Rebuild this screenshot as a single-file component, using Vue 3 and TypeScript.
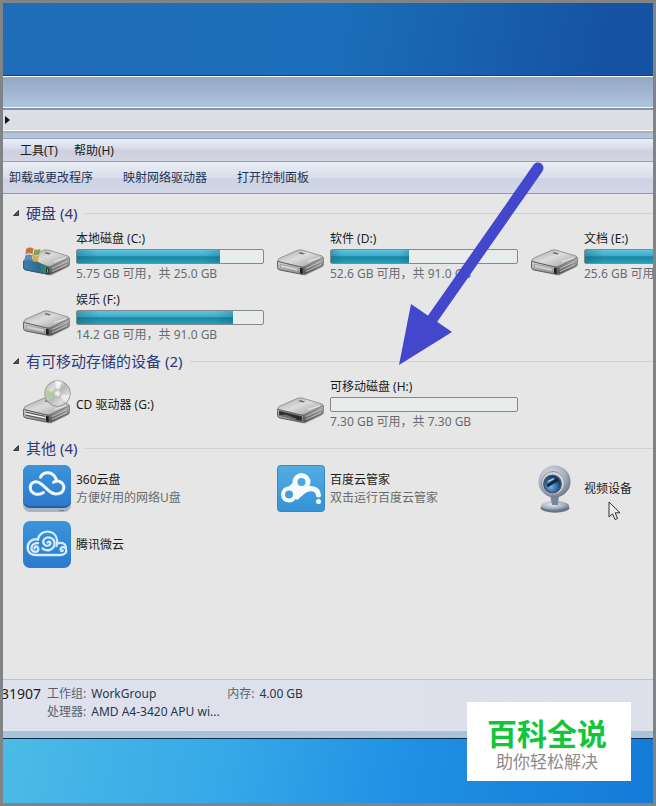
<script setup lang="ts">
type IconKind = 'system' | 'disk' | 'optical' | 'removable' | 'yun360' | 'baidu' | 'webcam' | 'weiyun'

interface Entry {
  name: string
  icon: IconKind
  used?: number
  note?: string
}

interface Group {
  title: string
  entries: Entry[]
}

const menus: string[] = ['工具(T)', '帮助(H)']
const commands: string[] = ['卸载或更改程序', '映射网络驱动器', '打开控制面板']

const groups: Group[] = [
  {
    title: '硬盘 (4)',
    entries: [
      { name: '本地磁盘 (C:)', icon: 'system', used: 77, note: '5.75 GB 可用，共 25.0 GB' },
      { name: '软件 (D:)', icon: 'disk', used: 42, note: '52.6 GB 可用，共 91.0 GB' },
      { name: '文档 (E:)', icon: 'disk', used: 72, note: '25.6 GB 可用，共 91.0 GB' },
      { name: '娱乐 (F:)', icon: 'disk', used: 84, note: '14.2 GB 可用，共 91.0 GB' },
    ],
  },
  {
    title: '有可移动存储的设备 (2)',
    entries: [
      { name: 'CD 驱动器 (G:)', icon: 'optical' },
      { name: '可移动磁盘 (H:)', icon: 'removable', used: 0, note: '7.30 GB 可用，共 7.30 GB' },
    ],
  },
  {
    title: '其他 (4)',
    entries: [
      { name: '360云盘', icon: 'yun360', note: '方便好用的网络U盘' },
      { name: '百度云管家', icon: 'baidu', note: '双击运行百度云管家' },
      { name: '视频设备', icon: 'webcam' },
      { name: '腾讯微云', icon: 'weiyun' },
    ],
  },
]

const isDrive = (icon: IconKind): boolean => ['system', 'disk', 'optical', 'removable'].includes(icon)
</script>

<template>
  <div class="desktop">
    <svg class="defs" width="0" height="0" aria-hidden="true">
      <defs>
        <linearGradient id="gTop" x1="0" y1="0" x2="1" y2="1">
          <stop offset="0" stop-color="#a2a2a2" /><stop offset=".45" stop-color="#dcdcdc" /><stop offset="1" stop-color="#999" />
        </linearGradient>
        <linearGradient id="gFront" x1="0" y1="0" x2="0" y2="1">
          <stop offset="0" stop-color="#dedede" /><stop offset="1" stop-color="#858585" />
        </linearGradient>
        <linearGradient id="gSide" x1="0" y1="0" x2="0" y2="1">
          <stop offset="0" stop-color="#b4b4b4" /><stop offset="1" stop-color="#4e4e4e" />
        </linearGradient>
        <linearGradient id="gSys" x1="0" y1="0" x2="1" y2="0">
          <stop offset="0" stop-color="#3f7fb4" /><stop offset=".6" stop-color="#2c6c8c" /><stop offset="1" stop-color="#3d9a52" />
        </linearGradient>
        <linearGradient id="gDisc" x1="0" y1="0" x2="1" y2="1">
          <stop offset="0" stop-color="#a6a6a6" /><stop offset=".3" stop-color="#dcdfda" /><stop offset=".5" stop-color="#b6bbb7" /><stop offset=".75" stop-color="#dedede" /><stop offset="1" stop-color="#949494" />
        </linearGradient>
        <linearGradient id="gYun" x1="0" y1="0" x2="0" y2="1">
          <stop offset="0" stop-color="#3a94db" /><stop offset="1" stop-color="#2c7ace" />
        </linearGradient>
        <linearGradient id="gBaidu" x1="0" y1="0" x2="0" y2="1">
          <stop offset="0" stop-color="#53ade2" /><stop offset="1" stop-color="#3492d6" />
        </linearGradient>
        <radialGradient id="gCam" cx=".4" cy=".35" r=".7">
          <stop offset="0" stop-color="#e4e8ef" /><stop offset=".6" stop-color="#aab2c0" /><stop offset="1" stop-color="#667184" />
        </radialGradient>
        <radialGradient id="gLens" cx=".4" cy=".65" r=".6">
          <stop offset="0" stop-color="#78b8e6" /><stop offset=".6" stop-color="#2f6ba4" /><stop offset="1" stop-color="#1b3554" />
        </radialGradient>
      </defs>
    </svg>

    <main class="window">
      <div class="titlebar"></div>
      <div class="address">
        <button class="crumb" type="button" aria-label="路径">
          <svg width="5" height="8" viewBox="0 0 5 8"><path d="M0 0 5 4 0 8Z" fill="#111" /></svg>
        </button>
      </div>
      <div class="glass"></div>
      <nav class="menubar">
        <button v-for="menu in menus" :key="menu" type="button">{{ menu }}</button>
      </nav>
      <div class="toolbar">
        <button v-for="command in commands" :key="command" type="button">{{ command }}</button>
      </div>

      <div class="content">
        <section v-for="group in groups" :key="group.title" class="group">
          <h2>
            <button type="button">
              <svg width="6" height="6" viewBox="0 0 6 6"><path d="M5.500 .5V5.500H.5Z" fill="#555" stroke="#3a3a3a" /></svg>
              {{ group.title }}
            </button>
          </h2>
          <ul>
            <li v-for="entry in group.entries" :key="entry.name" :class="{ drive: isDrive(entry.icon) }">
              <svg class="icon" viewBox="0 0 48 48" aria-hidden="true">
                <g v-if="isDrive(entry.icon)">
                  <path d="M2 40 28 46 47 36 46 33Z" fill="#000" opacity=".12" />
                  <path d="M1 30Q1 29 3 28L20 20.500Q22 19.500 25 20L45 26Q47 27 45 28.500L28 36.500Q26 37.500 23 37L3 32Q1 31.500 1 30Z" fill="url(#gTop)" stroke="#7b7b7b" stroke-width=".7" />
                  <path d="M46.500 27.500V34Q46.500 35.500 45 36.500L28 44.500 26 44V37.200Z" fill="url(#gSide)" stroke="#666" stroke-width=".6" />
                  <path d="M.7 31Q1 31.500 3 32L24 37Q26 37.300 26.300 37.200V44.500L3 40Q.7 39.500.5 37.500Z" fill="url(#gFront)" stroke="#5e5e5e" stroke-width="1" />
                  <path d="M29 38.500 44 31.500M29 41.500 44 34.500" stroke="#d0d0d0" stroke-width=".8" />
                  <path d="M23 22 28 23.500 26 24.500 21.500 23.200Z" fill="#6b6b6b" />
                  <path d="M31 31.500 43 27.800" stroke="#fff" stroke-width="1" opacity=".7" />
                  <path v-if="entry.icon === 'disk'" d="M3.500 34.200 21 38V41.500L3.500 37.700Z" fill="#cdcdcd" stroke="#8a8a8a" stroke-width=".6" />
                  <path v-if="entry.icon === 'removable'" d="M2 32.800 25 38.200V43.300L18 41.800 8 38.500 2 37.500Z" fill="#2b2b2b" stroke="#6a6a6a" stroke-width=".6" />
                  <path v-if="entry.icon === 'removable'" d="M3 37 9 36.500 19 40.500V41.500L3 38Z" fill="#6d6d6d" />
                  <g v-if="entry.icon === 'optical'">
                    <path d="M2.500 34 22 38.300M2.500 37 22 41.300" stroke="#4e4e4e" stroke-width="1" />
                    <path d="M2.500 35.500 22 39.800" stroke="#fff" stroke-width="1" />
                  </g>
                  <template v-if="entry.icon === 'system'">
                    <path d="M.7 31.200 9 29Q19 35 26.300 37.200V44.500L3 40Q.7 39.500.5 37.500Z" fill="url(#gSys)" stroke="#28526e" stroke-width=".7" />
                    <path d="M3 19Q7 16.500 10.500 18.500L9.500 24Q6 22.500 2.500 24.500Z" fill="#c9703f" />
                    <path d="M11.500 19Q14 20.500 17.500 18.800L16.300 24.500Q13 26 10.500 24.500Z" fill="#8aa04f" />
                    <path d="M2.300 25.500Q6 23.500 9.300 25.300L8.300 31Q5 29.500 1.500 31Z" fill="#5f88bd" />
                    <path d="M10.300 25.600Q13 27 16 25.500L15 31Q12 32.500 9.300 31Z" fill="#cfb04c" />
                  </template>
                  <path v-if="entry.icon !== 'removable'" d="M23.500 38 25.300 38.400V43.500L23.500 43.100Z" :fill="entry.icon === 'system' ? '#60e060' : '#222'" stroke="#111" stroke-width=".8" />
                </g>
                <g v-if="entry.icon === 'optical'">
                  <circle cx="34.500" cy="15.500" r="12.800" fill="url(#gDisc)" stroke="#8a8a8a" stroke-width=".8" />
                  <path d="M34.500 15.500 22.500 12A12.500 12.500 0 0 0 23 20.500Z" fill="#9ccb86" opacity=".65" />
                  <path d="M34.500 15.500 32 3.300A12.500 12.500 0 0 1 39 3.800Z" fill="#fff" opacity=".7" />
                  <path d="M34.500 15.500 46.800 17.500A12.500 12.500 0 0 1 43 24.500Z" fill="#fff" opacity=".5" />
                  <circle cx="34.500" cy="15.500" r="4" fill="#d7d9dc" stroke="#aaa" stroke-width=".8" />
                  <circle cx="34.500" cy="15.500" r="1.700" fill="#f3f3f3" />
                </g>

                <g v-if="entry.icon === 'yun360'">
                  <rect x="0" y="6" width="48" height="41" rx="7" fill="#aab3c1" />
                  <path d="M36 45.500H41" stroke="#747e91" />
                  <rect x="0" y="0" width="48" height="43" rx="7" fill="#255f9f" />
                  <rect x="0" y="0" width="48" height="41" rx="7" fill="url(#gYun)" />
                  <path d="M20.500 27.500C18 29.200 15.500 29.800 12.500 29C5.500 27 5.500 18 12.500 16.700C20 16 24 28.500 32.500 28.900C42 29 43.500 19.500 36.500 16.500C34.500 15.700 32.500 16.200 30.500 17.300M17.500 12.200C19.500 6.800 30 4.500 33.500 15" fill="none" stroke="#f2faff" stroke-width="3" stroke-linecap="round" />
                </g>

                <g v-if="entry.icon === 'baidu'">
                  <rect x=".5" y=".5" width="47" height="46" rx="3" fill="url(#gBaidu)" stroke="#3a88bd" />
                  <path d="M12 29.500 25 17.500" stroke="#f7fcff" stroke-width="12" />
                  <circle cx="12" cy="29.500" r="8" fill="#f7fcff" />
                  <circle cx="24.500" cy="17" r="9" fill="#f7fcff" />
                  <path d="M20 32C25 28 27 24 34 23.500Q41 24 41.500 30" fill="none" stroke="#f7fcff" stroke-width="5" stroke-linecap="round" />
                  <circle cx="12" cy="29.500" r="4" fill="#42a0dc" />
                  <circle cx="24.500" cy="17" r="4" fill="#49a6df" />
                  <circle cx="41.500" cy="36.500" r="2.500" fill="#f7fcff" />
                </g>

                <g v-if="entry.icon === 'weiyun'">
                  <rect x="0" y="0" width="48" height="47" rx="7" fill="url(#gYun)" />
                  <g fill="none" stroke="#d3ecff" stroke-width="2.300" stroke-linecap="round">
                    <path d="M24.500 21.500C27 19 29 23 25.500 24.500C21.500 26 18.500 21 21.500 18C25 14.500 32 17 31.500 23C31 29 24 31 19.500 27.500" />
                    <path d="M15 18.500C16 8.500 32 7.500 34 18.500C34.500 21 34.500 23 33.500 25" />
                    <path d="M11.500 27.500C11 24.800 15 24.500 15.300 28C15.300 31.500 9.500 32 8.500 28C8 24.500 11 21.500 15 22.200" />
                    <path d="M15 18.500C8 17 4 22.500 4.800 28C5.500 32.500 9 34 13 34H37.500C42 34 44 31 43 28C42 25.500 38 25.500 37.500 28.500C37.500 30 39 30.500 39.800 29.500" />
                    <path d="M34.500 22.500C38 21 42 22 43 26" />
                  </g>
                </g>

                <g v-if="entry.icon === 'webcam'">
                  <ellipse cx="24" cy="43" rx="14.500" ry="4.700" fill="#69758a" />
                  <ellipse cx="24" cy="40.800" rx="14" ry="4.700" fill="url(#gCam)" />
                  <path d="M19 30H28L27 40H21Z" fill="#77849b" />
                  <circle cx="23.500" cy="16.500" r="16" fill="url(#gCam)" />
                  <circle cx="22" cy="18" r="11.500" fill="#d0d6e0" stroke="#8792a5" />
                  <circle cx="21.500" cy="19" r="8.700" fill="url(#gLens)" stroke="#44556c" stroke-width="1.500" />
                  <path d="M16 21 27 14.500" stroke="#15263b" stroke-width="3" />
                  <path d="M17 16.500 23 13.500" stroke="#c2def5" stroke-width="1.200" />
                </g>
              </svg>
              <div class="info">
                <span class="name">{{ entry.name }}</span>
                <span v-if="entry.used !== undefined" class="bar">
                  <span class="fill" :style="{ width: entry.used + '%' }"></span>
                </span>
                <span v-if="entry.note" class="note">{{ entry.note }}</span>
              </div>
            </li>
          </ul>
        </section>
      </div>

      <footer class="details">
        <div class="machine">31907</div>
        <dl>
          <dt>工作组:</dt>
          <dd>WorkGroup</dd>
          <dt>处理器:</dt>
          <dd>AMD A4-3420 APU wi...</dd>
        </dl>
        <dl>
          <dt>内存:</dt>
          <dd>4.00 GB</dd>
        </dl>
      </footer>
    </main>

    <svg class="arrow" width="160" height="220" viewBox="0 0 160 220" aria-hidden="true">
      <path d="M148 13 41 166" stroke="#4247cb" stroke-width="11" stroke-linecap="round" />
      <path d="M9 210 21 149 62 177Z" fill="#4247cb" />
    </svg>
    <svg class="cursor" width="14" height="20" viewBox="0 0 14 20" aria-hidden="true">
      <path d="M1 1V16L4.500 12.800 7 18.500 9.500 17.500 7.200 11.800H12Z" fill="#eee" stroke="#333" stroke-width="1" />
    </svg>
    <aside class="brand">
      <strong>百科全说</strong>
      <span>助你轻松解决</span>
    </aside>
  </div>
</template>

<style>
body {
  margin: 0;
}
</style>

<style scoped>
.desktop {
  position: relative;
  box-sizing: border-box;
  display: flex;
  flex-direction: column;
  min-height: 100vh;
  padding: 72px 0 64px;
  border: 3px solid #808487;
  overflow: hidden;
  background:
    linear-gradient(100deg, #206cb8 0%, #1b6fba 50%, #1553a2 92%) 0 0 / 100% 72px no-repeat,
    linear-gradient(100deg, #4cbbe6 0%, #35a8e8 35%, #1f90e4 62%, #147bd8 100%) 0 100% / 100% 64px no-repeat;
  font-family: "Noto Sans", "Noto Sans CJK SC", sans-serif;
  font-size: 12px;
  line-height: 18px;
  color: #1c1c1c;
}

.defs {
  position: absolute;
}

button {
  padding: 0;
  border: 0;
  background: none;
  font: inherit;
  color: inherit;
}

.window {
  display: flex;
  flex: 1;
  flex-direction: column;
  border-top: 1px solid #1d3f70;
  border-bottom: 1px solid #0c2c4c;
  background: #e6e6e6;
}

.titlebar {
  height: 30px;
  border-top: 1px solid #fff;
  border-bottom: 1px solid #f2f6fb;
  background: linear-gradient(#93a8c3, #b0c4df);
}

.address {
  display: flex;
  align-items: center;
  height: 20px;
  border-top: 2px solid #8794a5;
  border-bottom: 1px solid #fafafa;
  background: #dbdee5;
}

.crumb {
  display: flex;
  padding-left: 2px;
}

.glass {
  height: 5px;
  border-top: 2px solid #a9b1be;
  border-bottom: 1px solid #97a5b9;
  background: #b2c3dc;
}

.menubar {
  display: flex;
  gap: 16px;
  height: 20px;
  align-items: center;
  padding: 2px 0 0 17px;
  border-bottom: 1px solid #989ead;
  background: linear-gradient(#e9eef6 0%, #d9dde9 40%, #cdcfe0 55%, #d4d5e4 100%);
}

.toolbar {
  display: flex;
  gap: 30px;
  height: 31px;
  align-items: center;
  padding-left: 6px;
  border-bottom: 1px solid #9199a6;
  background: linear-gradient(#e8edf4 0%, #d9deea 50%, #cdd3e4 55%, #d3d8e8 100%);
  color: #1e3353;
}

.content {
  display: flex;
  flex: 1;
  flex-direction: column;
  gap: 5px;
  padding-top: 7px;
  overflow: hidden;
}

h2 {
  display: flex;
  align-items: center;
  gap: 8px;
  height: 24px;
  margin: 0 0 5px;
  padding-left: 10px;
  font-size: 15px;
  font-weight: 400;
  color: #2f3a7c;
}

h2::after {
  content: "";
  flex: 1;
  height: 1px;
  background: #cfd1d3;
}

h2 button {
  display: flex;
  align-items: center;
  gap: 7px;
}

ul {
  display: grid;
  grid-template-columns: repeat(3, 254px);
  gap: 8px 0;
  margin: 0;
  padding: 0 0 0 20px;
  list-style: none;
}

li {
  display: flex;
  align-items: center;
  gap: 5px;
  min-height: 48px;
}

.icon {
  flex: none;
  width: 48px;
  height: 48px;
}

.drive .icon {
  align-self: flex-start;
}

.info {
  display: flex;
  flex-direction: column;
  white-space: nowrap;
}

.bar {
  box-sizing: border-box;
  width: 188px;
  height: 15px;
  margin: 1px 0;
  border: 1px solid #85898b;
  border-radius: 2px;
  background: #e9ecec;
}

.fill {
  display: block;
  height: 100%;
  background:
    linear-gradient(90deg, #0d566f55, transparent 14%, transparent 88%, #0d566f44),
    linear-gradient(#5fc4df 0%, #3dabc8 45%, #1a86a2 52%, #28a0ba 100%);
}

.note {
  color: #686c70;
}

.details {
  display: flex;
  align-items: flex-start;
  height: 46px;
  padding-top: 5px;
  border-top: 1px solid #bfc2c8;
  border-bottom: 7px solid #a9c3d8;
  background: linear-gradient(90deg, #dfe2ec, #dde0ea);
}

.machine {
  display: flex;
  justify-content: flex-end;
  width: 38px;
  margin-right: 6px;
  font-size: 14px;
  overflow: hidden;
}

dl {
  display: grid;
  grid-template-columns: auto 136px;
  column-gap: 5px;
  margin: 0;
  white-space: nowrap;
}

dt {
  color: #596170;
}

dd {
  margin: 0;
  color: #28364a;
}

.arrow {
  position: absolute;
  left: 387px;
  top: 152px;
  fill: none;
}

.cursor {
  position: absolute;
  left: 605px;
  top: 498px;
}

.brand {
  position: absolute;
  right: 22px;
  bottom: 22px;
  display: flex;
  flex-direction: column;
  align-items: center;
  padding: 12px 24px 10px 20px;
  background: #fff;
  font-family: "Noto Sans CJK SC", sans-serif;
}

.brand strong {
  font-size: 30px;
  line-height: 36px;
  font-weight: 700;
  color: #12c63c;
}

.brand span {
  font-size: 17px;
  line-height: 21px;
  color: #8c8c8c;
}
</style>
